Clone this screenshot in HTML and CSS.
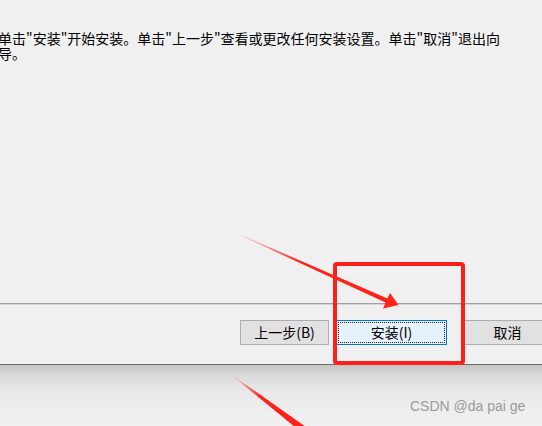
FILE: index.html
```html
<!DOCTYPE html>
<html lang="zh-CN">
<head>
<meta charset="utf-8">
<title>安装</title>
<link rel="stylesheet" href="styles.css">
</head>
<body>
<div class="window">
  <div class="content">
    <p class="intro">单击"安装"开始安装。单击"上一步"查看或更改任何安装设置。单击"取消"退出向导。</p>
  </div>
  <div class="separator"></div>
  <div class="footer">
    <button class="btn btn-back">上一步(B)</button>
    <button class="btn btn-install">安装(I)</button>
    <button class="btn btn-cancel">取消</button>
  </div>
</div>
<div class="shadow"></div>

<div class="highlight"></div>
<svg class="arrows" width="542" height="426" viewBox="0 0 542 426">
  <defs>
    <linearGradient id="fade1" gradientUnits="userSpaceOnUse" x1="238" y1="234" x2="300" y2="262">
      <stop offset="0" stop-color="#ff2218" stop-opacity="0"/>
      <stop offset="1" stop-color="#ff2218" stop-opacity="1"/>
    </linearGradient>
    <linearGradient id="fade2" gradientUnits="userSpaceOnUse" x1="233" y1="376" x2="260" y2="397">
      <stop offset="0" stop-color="#ff2218" stop-opacity="0"/>
      <stop offset="1" stop-color="#ff2218" stop-opacity="1"/>
    </linearGradient>
  </defs>
  <polygon fill="url(#fade1)" points="237.8,234.4 238.2,233.6 387.4,298.5 390,293 398.5,305 383,308.5 385.6,302.5"/>
  <polygon fill="url(#fade2)" points="232.8,376.3 233.2,375.7 323,439 317,445"/>
</svg>
<div class="watermark">CSDN @da pai ge</div>
</body>
</html>
```

FILE: styles.css
```css
html, body {
  margin: 0;
  padding: 0;
}

body {
  width: 542px;
  height: 426px;
  overflow: hidden;
  background: #f0f0f0;
  position: relative;
  font-family: "Noto Sans CJK SC", "Liberation Sans", sans-serif;
  color: #000;
}

.window {
  height: 365px;
  display: flex;
  flex-direction: column;
  background: #f0f0f0;
  border-bottom: 1px solid #6b6b6b;
  box-sizing: border-box;
}

.content {
  flex: 1;
  padding-top: 31px;
}

.intro {
  margin: 0 0 0 -2px;
  width: 520px;
  font-size: 14px;
  line-height: 15px;
}

.separator {
  height: 1px;
  background: #a0a0a0;
  border-bottom: 1px solid #d4d4d4;
}

.footer {
  height: 59px;
  box-sizing: border-box;
  padding: 15px 0 0 240px;
  display: flex;
  align-items: flex-start;
}

.btn {
  height: 25px;
  box-sizing: border-box;
  padding: 0;
  font-family: "Noto Sans CJK SC", "Liberation Sans", sans-serif;
  font-size: 14px;
  line-height: 21px;
  color: #000;
  background: #e1e1e1;
  border: 1px solid #adadad;
  border-radius: 0;
  flex: none;
}

.btn-back {
  width: 89px;
}

.btn-install {
  width: 111px;
  margin-left: 7px;
  background: #e5f1fb;
  border-color: #0078d7;
  outline: 1px dotted #222;
  outline-offset: -3px;
}

.btn-cancel {
  width: 89px;
  margin-left: 16px;
}

.shadow {
  height: 61px;
  background: linear-gradient(to bottom, #c4c4c4 0, #dcdcdc 12px, #e8e8e8 26px, #eeeeee 45px, #f0f0f0 61px);
}

.highlight {
  position: absolute;
  left: 333px;
  top: 262px;
  width: 132px;
  height: 103px;
  box-sizing: border-box;
  border: 4px solid #ff1f1a;
  border-radius: 4px;
}

.arrows {
  position: absolute;
  left: 0;
  top: 0;
}

.watermark {
  position: absolute;
  left: 410px;
  top: 398px;
  font-family: "Liberation Sans", sans-serif;
  font-size: 14px;
  line-height: 16px;
  color: #9a9a9a;
}
```
